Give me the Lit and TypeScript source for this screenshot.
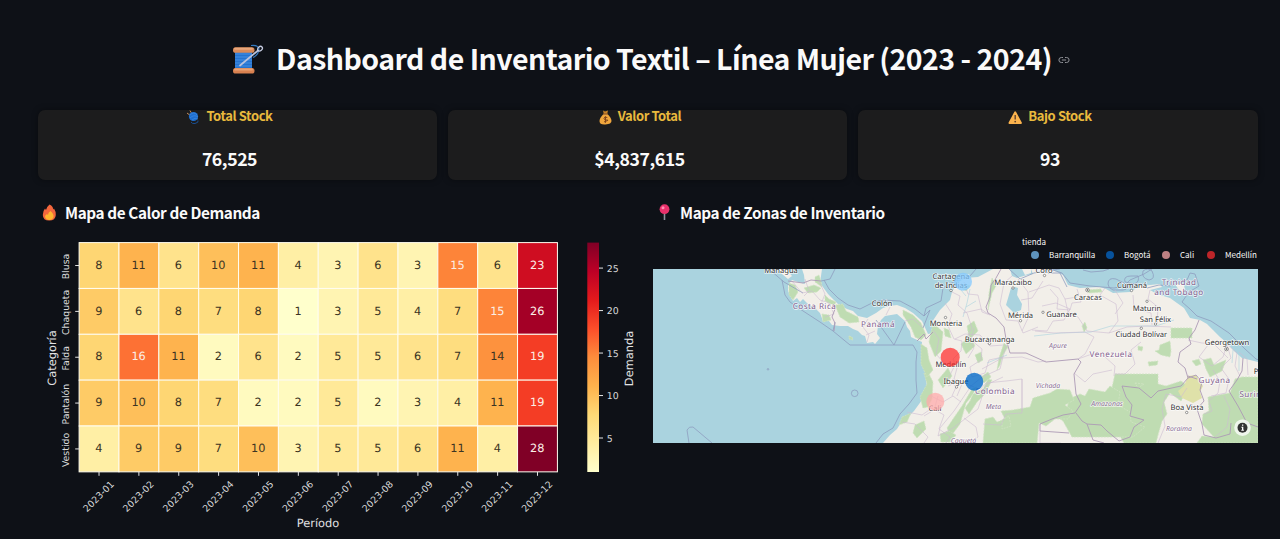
import { LitElement, html, svg, css } from "lit";
import { customElement, property } from "lit/decorators.js";

const MONTHS = Array.from({ length: 12 }, (_, i) => `2023-${String(i + 1).padStart(2, "0")}`);
const ROWS: [string, number[]][] = [
  ["Blusa", [8, 11, 6, 10, 11, 4, 3, 6, 3, 15, 6, 23]],
  ["Chaqueta", [9, 6, 8, 7, 8, 1, 3, 5, 4, 7, 15, 26]],
  ["Falda", [8, 16, 11, 2, 6, 2, 5, 5, 6, 7, 14, 19]],
  ["Pantalón", [9, 10, 8, 7, 2, 2, 5, 2, 3, 4, 11, 19]],
  ["Vestido", [4, 9, 9, 7, 10, 3, 5, 5, 6, 11, 4, 28]],
];
const SCALE = ["ffffcc", "ffeda0", "fed976", "feb24c", "fd8d3c", "fc4e2a", "e31a1c", "bd0026", "800026"];

function heat(v: number): string {
  const t = ((v - 1) / 27) * (SCALE.length - 1);
  const i = Math.min(Math.floor(t), SCALE.length - 2);
  const ch = (s: string, k: number) => parseInt(s.slice(k * 2, k * 2 + 2), 16);
  const c = [0, 1, 2].map((k) => Math.round(ch(SCALE[i], k) + (ch(SCALE[i + 1], k) - ch(SCALE[i], k)) * (t - i)));
  return `rgb(${c.join(",")})`;
}

@customElement("heat-map")
export class HeatMap extends LitElement {
  static styles = css`
    :host { display: block; }
    svg { display: block; font-family: "DejaVu Sans", sans-serif; text-rendering: geometricPrecision; }
    .cell { stroke: #fffdf0; stroke-width: 1; }
    .num { font-size: 11.3px; text-anchor: middle; }
    .tick { font-size: 9.4px; fill: #d9dadb; }
    .axis { font-size: 11.4px; fill: #e2e3e4; text-anchor: middle; }
    .mark { stroke: #e6e6e6; stroke-width: 1; }
  `;
  render() {
    const x0 = 79.1, y0 = 242.6, w = 39.86, h = 45.85;
    return html`<svg width="607" height="305" viewBox="38 234 607 305">
      <defs>
        <linearGradient id="ramp" x1="0" y1="1" x2="0" y2="0">
          ${SCALE.map((c, i) => svg`<stop offset=${i / 8} stop-color=${"#" + c}></stop>`)}
        </linearGradient>
      </defs>
      ${ROWS.map(([name, vals], r) => {
        const cy = y0 + h * (r + 0.5);
        return svg`
          ${vals.map((v, c) => svg`
            <rect class="cell" x=${x0 + c * w} y=${y0 + r * h} width=${w} height=${h} fill=${heat(v)}></rect>
            <text class="num" x=${x0 + (c + 0.5) * w - 0.3} y=${cy + 3.2} fill=${v >= 15 ? "#fbeee6" : "#3b3423"}>${v}</text>`)}
          <line class="mark" x1="75.2" x2="79" y1=${cy} y2=${cy}></line>
          <text class="tick" text-anchor="middle" transform="translate(69.2 ${cy + 1}) rotate(-90)">${name}</text>`;
      })}
      ${MONTHS.map((m, c) => {
        const cx = x0 + (c + 0.5) * w;
        return svg`<line class="mark" x1=${cx} x2=${cx} y1="472" y2="475.8"></line>
          <text class="tick" text-anchor="middle" transform="translate(${cx + 1.8} 498.600) rotate(-45)">${m}</text>`;
      })}
      <text class="axis" x="318" y="526.5">Período</text>
      <text class="axis" transform="translate(55.500 358) rotate(-90)">Categoría</text>
      <rect x="587.3" y="242.6" width="11.7" height="229.4" fill="url(#ramp)"></rect>
      ${[5, 10, 15, 20, 25].map((v) => {
        const y = 472 - ((v - 1) / 27) * 229.4;
        return svg`<line class="mark" x1="599" x2="603" y1=${y} y2=${y}></line>
          <text class="tick" x="606.8" y=${y + 3.5}>${v}</text>`;
      })}
      <text class="axis" transform="translate(632.700 358.500) rotate(-90)">Demanda</text>
    </svg>`;
  }
}

const COAST =
  "M993 269 L978 277 965 278 957 283 952 292 950 300 940 310 932 322 933 333 928 334 922 321 913 313 905 308 897 305 889 306 883 308 876 313 867 318 858 316 853 311 847 309 838 304 828 294 820 283 822 269 H802 L804 275 805 284 798 282 792 280 788 285 788 291 793 301 797 298 800 302 803 299 808 304 815 308 820 313 823 321 829 321 832 325 840 326 848 326 853 329 858 331 862 335 865 336 867 343 873 342 875 344 880 338 877 334 878 326 881 320 885 316 897 314 905 321 907 327 910 331 911 337 915 339 922 342 921 353 923 362 928 373 926 381 928 390 922 400 914 411 910 415 902 421 897 429 890 435 883 443H1258 V362 L1242 358 1234 351 1227 343 1220 337 1213 330 1207 324 1200 320 1190 318 1184 308 1170 298 1157 294 1150 290 1162 287 1160 284 1140 286 1130 292 1113 293 1106 289 1100 287 1080 288 1068 285 1063 275 1055 271 1050 269H1031 L1033 274 1027 275 1017 278 1012 276 1010 269Z";

const GREENS = [
  "M1115 374h43v10l8 2 15-5 8 6-8 14-11-8-6 9 3 12-5 7-4 14-2 8h-32l-5-9 7-5-13-7-2-10-8-9 8-11z",
  "M1080 394l5 2 4-7 16 3 5-6 10 6-2 13 12 7 1 10 14 5-12 10h-61l-9-16-7-5 10-4 2-8-5-7 8 1z",
  "M1242 377h16v66h-61l5-7 12 1-12-13 1-10 6-3-1-14 22-4 5-14z",
  "M985 419l8-2 4 5 8-3-4-8 12-1 17-3 3-9 17-5 7-4 13 1 4 10-9 5 8 6-5 8h-13l-9 7-7-3-2 20H983z",
  "M928 372l5 10-1 17-4 8-5 1-3-11 7-13-3-11z",
  "M921 344l6 4 2 12 4 10-6 7-6-13z", "M933 323l10 9-2 19-6 6-6-15z",
  "M967 326l7-5 4 10-7 7 4 8-9 8-5-10 8-7z", "M944 328l5 2 2 8-6-2z",
  "M970 401l3-7 10-5 5-10 4 1-7 14-8 8-8 12-4-6z",
  "M966 403l5-6 6-10-5 2-10 17-9 13-6 9 4 8 9-12z", "M903 310l10 5 8 8 5 12-5 5-6-3-4-10-8-12z",
  "M1171 328h21v10h-21z", "M1160 345l10-4 1 10-1 6-9-2-6-4 4-1z", "M1203 360l8-2 3 7 12-5-4 11-12 6-4-8z",
  "M1192 361l7-2 2 5-5 2z", "M835 305l8-1 3 7 12 6 1 5-10 1-9-6z", "M815 277l4-2 2 6 1 6-7-5z",
  "M789 283l6 2 3 7-5 8-4-5z", "M822 314l7 1 2 5-8 2z", "M825 295l4 4 7 3-2 4-9-5z", "M804 288l10-3 7 3-4 4-9 1z", "M849 336l3 1 1 3-4-1z",
  "M1004 343l4 4-5 8-3 10-3 5 2-12z", "M988 310l4-17 4-7-4-8-3 15z",
  "M938 380l10-12 4 8-9 12z", "M962 288l3-4 5 2-4 5z", "M1082 326l3-4 2 6-3 4z", "M1087 290l14-1 1 3-13 1z",
  "M902 417l9-4-4 9-8 3z", "M915 425l9-4 2 8-9 9-4-5z", "M940 434l9-3 7 4-5 7h-10z", "M1138 346l5 1-1 4-4-1z",
  "M1148 362l10-1-1 4-8 1z", "M1135 383l9 1-6 4z", "M1002 420l7-4 2 10-9 3z", "M975 355l6-3 2 8-5 3z", "M981 377l7-5 3 5-7 6z",
];

const MARITIME = [
  "M782 280 785 295 790 302 800 309 820 322 833 331 850 345H913L917 352 916 362 916 380 917 393 909 404 900 414 893 428 883 434 876 443",
  "M824 280 829 289 838 298 848 305 860 309",
  "M821 281 830 279 835 269M860 309 872 303 883 300 900 301 915 309 924 316 926 308 941 301 943 288 957 280 970 276 976 269",
  "M923 328 930 310 924 316", "M876 320 894 345 905 322", "M833 331 835 322",
  "M1009 269 1020 279 1034 273 1046 271 1060 269", "M1050 269 1062 273 1070 283 1090 286 1114 288 1124 286 1130 280 1144 274 1152 269",
  "M1108 284q0-7 8-5l8 4q7 6-1 7l-10 0q-5-2-5-6z", "M1125 282q-2-6 6-6h7q2 6-4 8z", "M1143 271q5-4 9 0 4 8-3 9-8-2-6-9z", "M1083 270l8 2 12-1 6-2",
  "M1147 288l12-3 11 1 17-6 3-7 5 1 4 12-10 6-7 10 8 7 7 7 14 5 18 12 16 16 11 10 22 7",
  "M689 443l-2-13q2-4 6-3l19 16", "M770 270l14 12 19 11", "M1044 269 1048 273 1060 273 1067 287",
];

const COUNTRIES = [
  "M1001 269 996 278 991 285 990 297 986 307 988 313 996 318 1004 327 1006 339 1010 353 1026 353 1046 362 1078 359 1081 362 1074 374 1076 394 1081 404 1075 413 1063 415 1052 419 1040 424 1040 431 1069 433",
  "M1076 413 1082 421 1087 424 1093 440 1104 443", "M1087 424 1101 425 1107 431 1119 441 1130 437 1134 427 1144 420 1130 416 1132 405 1126 397 1122 386 1139 388 1151 398 1158 391 1181 386 1188 378 1185 368 1178 362 1180 352 1191 344 1189 338 1195 330 1199 320",
  "M1188 378 1196 375 1202 382 1200 390 1204 401 1197 409 1202 424 1204 435 1216 438 1230 434 1231 423",
  "M1243 358 1242 371 1237 380 1229 391 1238 406 1247 423 1258 427", "M1188 376 1197 379",
  "M917 341 924 334 926 339 933 332", "M788 281 803 283 811 280 821 281", "M834 331 835 323 832 317 835 309",
];

const REGIONS = [
  "M952 292l8 4-2 9 9 8 5 15-4 7 6 13-6 10", "M945 303l7 11-4 12 6 13 8 2-1 10-8 8 4 9-3 11 8 5-5 12",
  "M964 282l4 12 10 1 4 17 8 3", "M933 330l6 9-3 15 8 9 10 4-6 12 8 8-4 9", "M974 328l-3 12 11 9-1 11-11 7 2 10 13-4 4-13 14-3 4-15",
  "M1003 357l-3 12-18 8-11 9-17 25-14 17-2 8 15-8 25-19 8-24 17-8", "M982 369l20-11 20-1 16 5 8-1",
  "M978 392l8-9 20-2 16-2v34l-16 1-5 11-18-1", "M1022 379v32M1040 431v12h21", "M929 395l14 7 10-6 8 6", "M907 412l15 3 10-7 12 7-5 14 11 8-4 6",
  "M902 422l13 2 13 13-4 6M938 396l-4 14-10 6", "M964 418l12 9 2 10-9 6", "M1012 276l-8 7-4 21 6 16 12 1 5 12 15-6",
  "M1018 279l10 13 1 24-7 15M1029 292l20-7 10 3 6 11 12-2", "M1043 281l-11 17-11 2M1042 306l14-3 14 6-6 11-11 1-6 10-15-1",
  "M1065 299l3 13 10 5 9 14 22 2 9-12-2-17-16-9 5-7", "M1050 289l8 9-1 11 13 1 2-7 9-1-4-13", "M1078 359l14-5 12 2 11 10-1 10",
  "M1074 373l11 9 8-8 19-4", "M1035 331l19 2 31-1 9 5-9 17-7 5", "M1115 374h10l10-10-4-14 10-8M1109 333l18-6 20-1 24 1", "M1115 290l8 13-8 11M1133 295l1 13 17 5 1 12M1150 290l-2 9 10 8-1 17",
  "M1188 340l14 3 12 1 14 14M1208 345l-9 12 13 9 11-9 4-13", "M1213 370l7 11-2 12-9 8 3 10-8 3M1227 345l4 13-10 10 8 11-3 14-15 3",
  "M1228 345l9 8-2 13 5 10M1239 352l8 7 1 16M1224 396l6 13-3 18-12 10", "M792 281l10 12 10-2 8 9 9 3 5 11-9 3M805 279l4 12-5 5M819 281l6 13-4 10", "M868 319l-5 8 6 8-2 7M875 331l-9 4M890 307l-4 8M905 321l8-2 9 8",
  "M1187 388l-6 9-15-3-4 15 3 17-7 17", "M963 313l18-4 7 5M955 339l10-5 15 1 10 11 14-1M948 386l12-5 14 6",
];

const LABELS: [number, number, string, string][] = [
  [781, 272.8, "Managua", "c"], [814.500, 308.5, "Costa Rica", "n"], [882, 305.5, "Colón", "c"], [878, 326.5, "Panamá", "n"],
  [951, 279, "Cartagena", "c"], [951, 288.3, "de Indias", "c"], [1013, 284.8, "Maracaibo", "c"], [1044, 272.8, "Coro", "c"],
  [946, 326.3, "Monteria", "c"], [1020.5, 318, "Mérida", "c"], [1061.5, 316.5, "Guanare", "c"], [989.7, 341.5, "Bucaramanga", "c"],
  [950.8, 367, "Medellín", "c"], [956, 384.3, "Ibague", "c"], [995, 394, "Colombia", "n"], [935, 411, "Cali", "c"],
  [993.5, 408.7, "Meta", "r"], [1048, 388.3, "Vichada", "r"], [1058, 347.8, "Apure", "r"], [963.5, 442.5, "Caquetá", "r"],
  [1088, 300, "Caracas", "c"], [1132, 288, "Cumaná", "c"], [1179, 284.5, "Trinidad", "n"], [1179, 295, "and Tobago", "n"],
  [1147, 310.5, "Maturin", "c"], [1155.5, 322, "San Félix", "c"], [1141.3, 337.2, "Ciudad Bolívar", "c"], [1227, 345, "Georgetown", "c"],
  [1111, 357, "Venezuela", "n"], [1214.5, 383, "Guyana", "n"], [1107, 405.5, "Amazonas", "r"], [1187, 410, "Boa Vista", "c"],
  [1179, 430.8, "Roraima", "r"], [1250.500, 396.5, "Surin", "n"], [1256, 374, "P", "c"],
];
const TOWNS = [[951, 290.5], [1013, 288], [1044.5, 275.5], [945.5, 317.5], [1020.5, 320.7], [1043, 312.3], [989.5, 343.5], [956.5, 387], [1131.5, 290.5], [1147, 301.3], [1155.5, 324], [1141.3, 328.3], [1186.7, 412.5]];
const CAPITALS = [[1087.5, 290], [1226.5, 349]];

@customElement("zone-map")
export class ZoneMap extends LitElement {
  static styles = css`
    :host { display: block; }
    svg { display: block; font-family: "Noto Sans", sans-serif; text-rendering: geometricPrecision; }
    text { text-anchor: middle; paint-order: stroke; stroke: #ffffffb8; stroke-width: 1.6; stroke-linejoin: round; }
    .c { font-size: 7.6px; fill: #333; }
    .n { font-size: 8.1px; fill: #83618f; letter-spacing: 0.45px; }
    .r { font-size: 6.9px; fill: #8c7096; font-style: italic; }
    .sea { fill: #aad3df; }
    .land { fill: #f2efe9; }
    .green { fill: #bfdcb2; stroke: #cfe3c3; stroke-width: 0.8; stroke-dasharray: 2 1; }
    .line { fill: none; stroke-linejoin: round; }
    .maritime { stroke: #8e9dbf; stroke-width: 0.8; }
    .country { stroke: #ad9ab5; stroke-width: 0.9; }
    .region { stroke: #cdbcd1; stroke-width: 0.6; }
    .town { fill: #fff; stroke: #555; stroke-width: 0.6; }
    .river { fill: none; stroke: #aad3df; stroke-width: 0.6; }
  `;
  render() {
    return html`<svg width="605" height="174" viewBox="653 269 605 174">
      <rect class="sea" x="653" y="269" width="606" height="174"></rect>
      <path class="land" d=${COAST}></path>
      <path class="land" d="M779 269h7l6 7-4 3-6-5zM1175 284l9 0 1 8-8 2 2-4zM1022 269h9v4l-6 2z"></path>
      ${GREENS.map((d) => svg`<path class="green" d=${d}></path>`)}
      <path fill="#dfe1a9" d="M1188 376l8-1 3 5 4 6-3 6 2 6-9 5-11-5-4-7 6-5z"></path>
      <path fill="#aad3df" d="M1011 288l4-1 3 1-1 7 5 9-1 6-7 3-8-8z"></path>
      <path class="river" d="M970 289l-3 14-4 14M961 290l5 6M976 301l-10 6M1034 336l27-3 30-1 20-6 25 0 20 0 18-6M987 363l20-8M1233 350l-1 13M1239 354l0 17"></path>
      ${MARITIME.map((d) => svg`<path class="line maritime" d=${d}></path>`)}
      ${REGIONS.map((d) => svg`<path class="line region" d=${d}></path>`)}
      ${COUNTRIES.map((d) => svg`<path class="line country" d=${d}></path>`)}
      <circle class="line maritime" cx="854.7" cy="393.3" r="3.3"></circle>
      <circle class="line maritime" cx="768" cy="369.3" r="0.8"></circle>
      ${TOWNS.map(([x, y]) => svg`<circle class="town" cx=${x} cy=${y} r="1.2"></circle>`)}
      ${CAPITALS.map(([x, y]) => svg`<circle class="town" cx=${x} cy=${y} r="1.8"></circle><circle cx=${x} cy=${y} r="0.8" fill="#444"></circle>`)}
      ${LABELS.map(([x, y, t, k]) => svg`<text class=${k} x=${x} y=${y}>${t}</text>`)}
      <circle cx="963" cy="281.7" r="9" fill="#83c9ff" opacity="0.75"></circle>
      <circle cx="974.3" cy="381.7" r="9" fill="#0068c9" opacity="0.78"></circle>
      <circle cx="935.3" cy="401.7" r="9" fill="#ffabab" opacity="0.75"></circle>
      <circle cx="950.2" cy="357.3" r="9.5" fill="#ff2b2b" opacity="0.72"></circle>
      <circle cx="1242.5" cy="427.7" r="8.3" fill="#fff" opacity="0.75"></circle>
      <circle cx="1242.5" cy="427.7" r="5" fill="#333"></circle>
      <path d="M1242 424.6h1.300v1.200H1242zM1241.400 426.700h1.900v3h.6v1h-2.600v-1h.7v-2h-.6z" fill="#fff"></path>
    </svg>`;
  }
}

const ICONS: Record<string, unknown> = {
  spool: svg`<svg width="33" height="32" viewBox="0 0 33 32">
    <rect x="4" y="6" width="17" height="22" fill="#2573cf"></rect>
    <path d="M4 10h17M4 13h17M4 16h17M4 19h17M4 22h17" stroke="#4590e4" stroke-width="1"></path>
    <rect x="2" y="3.3" width="21.5" height="5.5" rx="2.6" fill="#d98a58"></rect><rect x="3" y="3.7" width="19" height="2" rx="1" fill="#e8a77c"></rect>
    <rect x="2" y="24" width="21.5" height="5.5" rx="2.6" fill="#d88150"></rect><rect x="3" y="24.5" width="19" height="2" rx="1" fill="#e8a375"></rect>
    <path d="M20 1.500q6-1 8 3 0 6-6 9" fill="none" stroke="#3478bd" stroke-width="1.200"></path>
    <path d="M9 21.500L27 6.500" stroke="#b9c2dd" stroke-width="1.700" stroke-linecap="round"></path>
    <ellipse cx="29" cy="4.700" rx="2.600" ry="2" transform="rotate(-40 29 4.700)" fill="none" stroke="#c5cbe0" stroke-width="1.300"></ellipse></svg>`,
  yarn: svg`<svg width="15" height="15" viewBox="0 0 15 15"><path d="M1 3l4 3M4 .5L6 4" stroke="#c98d58" stroke-width="1"></path>
    <circle cx="7.500" cy="6.500" r="4.600" fill="#1f6fd0"></circle><path d="M4 5q4-4 7 0M4 8q4-4 8-1M6 10q3-3 6-1" fill="none" stroke="#3a88e0" stroke-width=".8"></path>
    <path d="M5 12q1 2 4 1.500 4-1 3-3" fill="none" stroke="#194e91" stroke-width="1"></path></svg>`,
  bag: svg`<svg width="15" height="15" viewBox="0 0 15 15"><path d="M5 .5l2 1 3-1-1 4H6z" fill="#c98328"></path><path d="M5.500 4h4q4 4 4 7t-6 3.500T1.500 11q0-3 4-7z" fill="#f0a63d"></path>
    <path d="M5 4h5" stroke="#8e572a" stroke-width="1.200"></path><path d="M9.300 7.500Q6 6.300 6 8.300t3 1.800-3 1.800M7.500 6.300v6.500" fill="none" stroke="#80451c" stroke-width="1"></path></svg>`,
  warn: svg`<svg width="15" height="15" viewBox="0 0 15 15"><path d="M7.200 2.200L13 13H1.400z" fill="#fbb34d" stroke="#fbb34d" stroke-width="1.800" stroke-linejoin="round"></path>
    <path d="M7.200 5v4.500" stroke="#5f422e" stroke-width="1.400"></path><circle cx="7.200" cy="11.600" r=".9" fill="#5f422e"></circle></svg>`,
  fire: svg`<svg width="15" height="17" viewBox="0 0 15 17"><path d="M7.500.5q4 2 3.500 5l1-1q2 3 1.800 6.500Q13.500 16.500 7.200 16.500T.8 11Q.800 7 3 4.500L4 6Q4.500 3 7.500.5z" fill="#f4673d"></path>
    <path d="M8.500 7q3.500 3 3 6-1 3-4.200 3T3 13q0-2 2-3l1 1q0-2.500 2.500-4z" fill="#ffb62f"></path></svg>`,
  pin: svg`<svg width="15" height="17" viewBox="0 0 15 17"><path d="M7.500 9v7" stroke="#8c929c" stroke-width="1.600"></path><circle cx="7.500" cy="5.200" r="4.900" fill="#e8316b"></circle><circle cx="6" cy="3.700" r="1.500" fill="#ff8db1"></circle></svg>`,
  link: svg`<svg width="12" height="8" viewBox="0 0 12 8"><path d="M5 1.500H3.400a2.500 2.500 0 0 0 0 5H5M7 1.500h1.600a2.500 2.500 0 0 1 0 5H7M3.900 4h4.200" fill="none" stroke="#8f9197" stroke-width="1"></path></svg>`,
};

@customElement("metric-card")
export class MetricCard extends LitElement {
  @property() icon = "";
  @property() label = "";
  @property() value = "";
  static styles = css`
    :host { display: block; box-sizing: border-box; height: 70px; padding-right: 16px; border-radius: 7px; background: #1c1c1d; box-shadow: 0 0 6px #0006; text-align: center; }
    .label { display: flex; justify-content: center; align-items: center; gap: 5px; height: 14px; color: #e9ba3d; font-size: 13px; line-height: 14px; font-weight: 700; letter-spacing: -0.4px; }
    .label span { margin-top: -3px; }
    .value { margin-top: 22px; line-height: 24px; color: #fafafa; font-size: 17.7px; font-weight: 700; letter-spacing: -0.45px; }
    svg { display: block; }
  `;
  render() {
    return html`<div class="label">${ICONS[this.icon]}<span>${this.label}</span></div><div class="value">${this.value}</div>`;
  }
}

@customElement("app-root")
export class AppRoot extends LitElement {
  static styles = css`
    :host { display: block; box-sizing: border-box; height: 539px; overflow: hidden; padding: 38px 22px 0 38px; background: #0e1117; color: #fafafa; font-family: "Noto Sans CJK JP", sans-serif; }
    svg { display: block; }
    .title { display: flex; justify-content: center; align-items: center; height: 40px; margin: 0 0 32px; padding-left: 5px; font-size: 28.5px; line-height: 40px; font-weight: 700; letter-spacing: -0.53px; white-space: nowrap; }
    .title-text { margin: 0 6px 0 12px; }
    .title svg { margin-top: 4px; }
    .metrics { display: grid; grid-template-columns: 399px 399px 400px; gap: 11px; }
    .panels { display: grid; grid-template-columns: 607px 605px; gap: 8px; margin-top: 20px; }
    h2 { display: flex; align-items: center; gap: 8px; height: 24px; margin: 0; padding-left: 4px; font-size: 15.3px; line-height: 24px; font-weight: 700; letter-spacing: -0.4px; }
    heat-map { margin-top: 10px; }
    .legend { display: flex; flex-direction: column; align-items: flex-start; width: 236px; height: 33px; margin: 12px 0 0 auto; font-family: "Noto Sans CJK JP", sans-serif; font-size: 8px; line-height: 12px; }
    .items { display: grid; grid-template-columns: 75px 56px 45px 50px; padding-left: 9px; margin-top: 1px; }
    .item { display: flex; align-items: center; gap: 10px; }
    .dot { width: 8px; height: 8px; border-radius: 50%; }
    .barranquilla { background: #5e93bd; } .bogota { background: #07529c; } .cali { background: #bd8083; } .medellin { background: #bd2529; }
  `;
  render() {
    return html`
      <h1 class="title">${ICONS.spool}<span class="title-text">Dashboard de Inventario Textil – Línea Mujer (2023 - 2024)</span>${ICONS.link}</h1>
      <section class="metrics">
        <metric-card icon="yarn" label="Total Stock" value="76,525"></metric-card>
        <metric-card icon="bag" label="Valor Total" value="$4,837,615"></metric-card>
        <metric-card icon="warn" label="Bajo Stock" value="93"></metric-card>
      </section>
      <section class="panels">
        <div><h2>${ICONS.fire}<span>Mapa de Calor de Demanda</span></h2><heat-map></heat-map></div>
        <div><h2>${ICONS.pin}<span>Mapa de Zonas de Inventario</span></h2>
          <div class="legend"><span>tienda</span>
            <div class="items">
              <div class="item"><i class="dot barranquilla"></i>Barranquilla</div>
              <div class="item"><i class="dot bogota"></i>Bogotá</div>
              <div class="item"><i class="dot cali"></i>Cali</div>
              <div class="item"><i class="dot medellin"></i>Medellín</div>
            </div>
          </div>
          <zone-map></zone-map>
        </div>
      </section>`;
  }
}
